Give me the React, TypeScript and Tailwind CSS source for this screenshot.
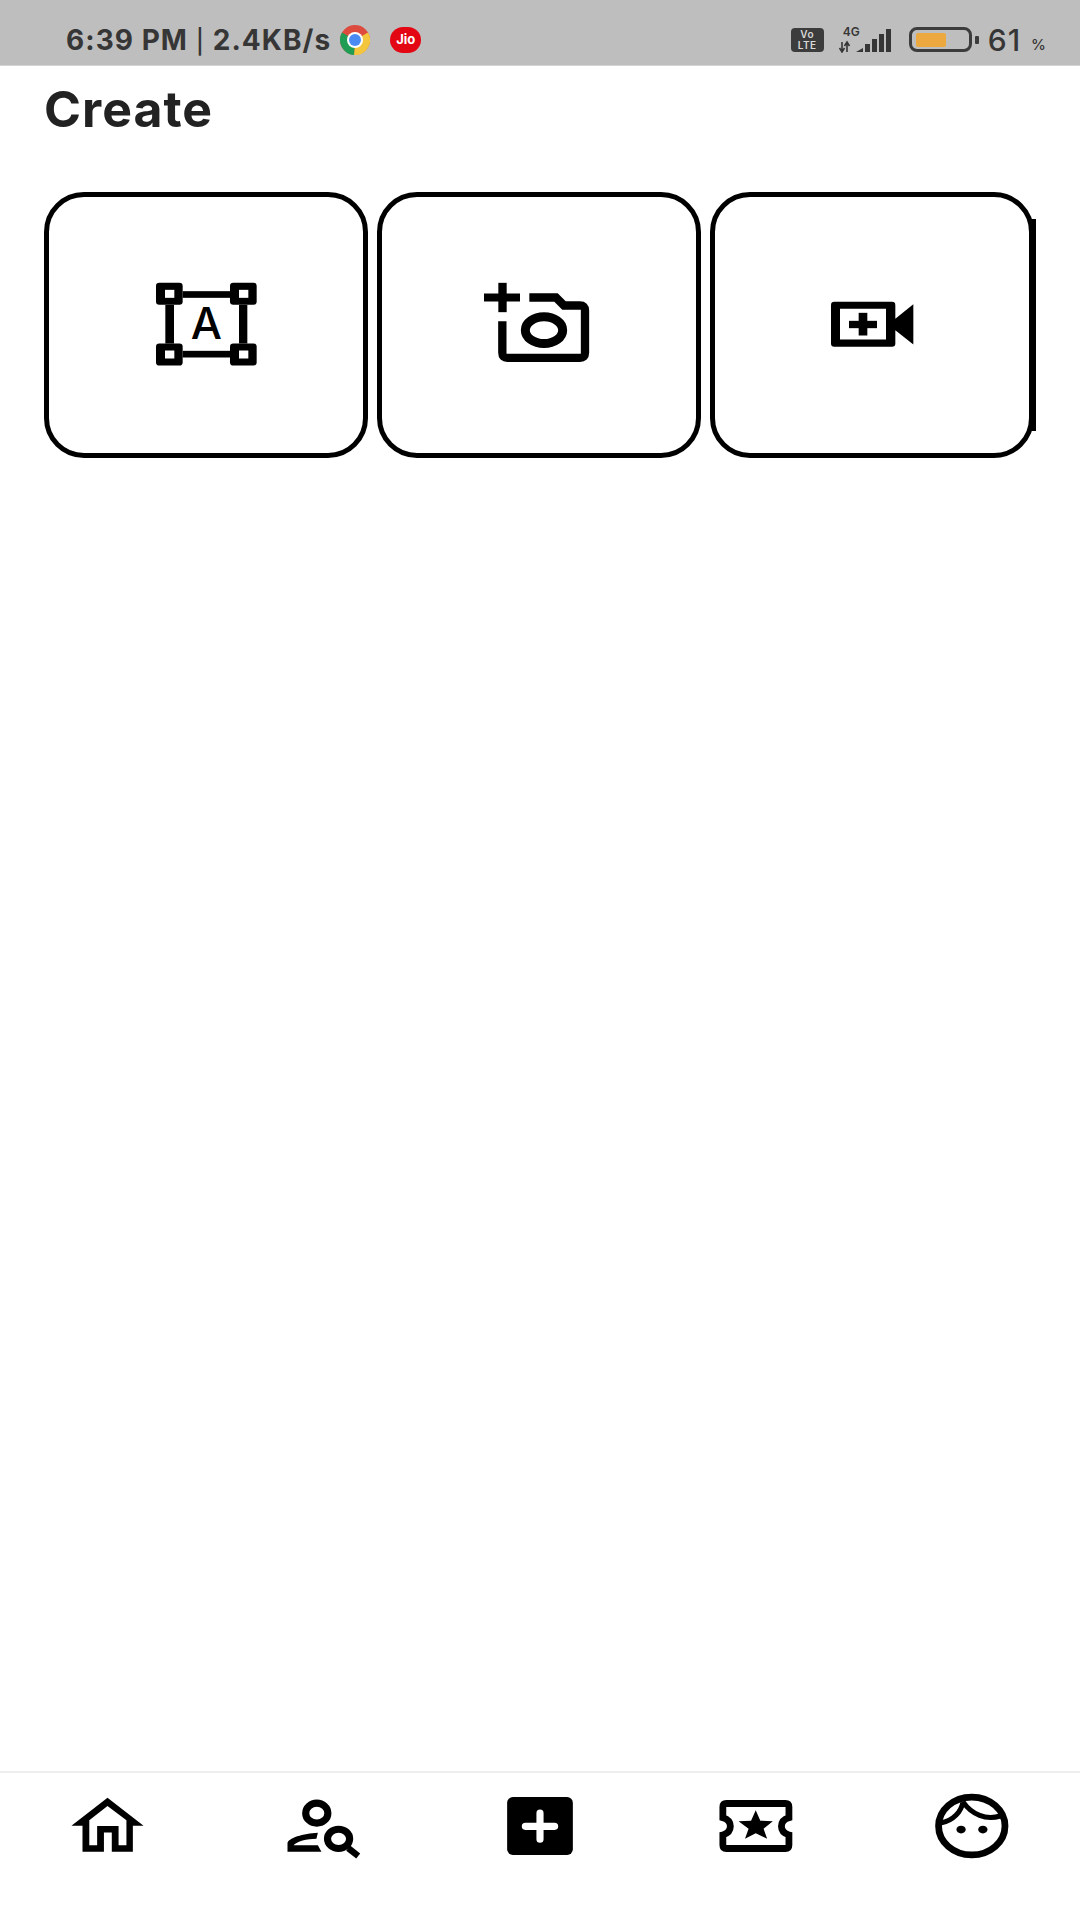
const font = { fontFamily: "Inter, 'Liberation Sans', sans-serif" };

function Card({ viewBox, children }: { viewBox: string; children: React.ReactNode }) {
  return (
    <div className="w-[324px] h-[266px] shrink-0 rounded-[40px] border-[5px] border-black bg-white flex items-center justify-center">
      <svg width="120" height="100" viewBox={viewBox}>{children}</svg>
    </div>
  );
}

function NavItem({ viewBox, children }: { viewBox: string; children: React.ReactNode }) {
  return (
    <div className="flex-1 flex justify-center pt-[13px]">
      <svg width="120" height="80" viewBox={viewBox}>{children}</svg>
    </div>
  );
}

function Chrome() {
  return (
    <svg width="30" height="30" viewBox="-15 -15 30 30" className="ml-[9px]">
      <circle r="15" fill="#dd4b3e" />
      <path d="M0 0 L13 -7.5 A15 15 0 0 1 -1 15 Z" fill="#f4c63d" />
      <path d="M0 0 L-1 15 A15 15 0 0 1 -13 -7.5 Z" fill="#1f9d55" />
      <circle r="8" fill="#fff" />
      <circle r="6" fill="#4a8af4" />
    </svg>
  );
}

export default function App() {
  return (
    <div className="w-[1080px] h-[1920px] flex flex-col bg-white overflow-hidden" style={font}>
      <div className="h-[66px] shrink-0 bg-[#bebebe] border-b border-[#d4d4d4] flex items-center pl-[66px] pr-[34px] pt-[14px] text-[#363636]">
        <span className="text-[28px] font-bold leading-none tracking-[1.05px] whitespace-nowrap">
          6:39 PM <span className="text-[24px] font-medium">|</span> 2.4KB/s
        </span>
        <Chrome />
        <div className="ml-[20px] w-[31px] h-[26px] rounded-full bg-[#e30613] text-white text-[13px] font-bold flex items-center justify-center">Jio</div>
        <div className="flex-1" />
        <div className="w-[33px] h-[24px] rounded-[4px] bg-[#3c3c3c] text-[#d8d8d8] text-[10px] leading-[11px] font-semibold flex flex-col items-center justify-center tracking-[0.5px]">
          <span>Vo</span>
          <span>LTE</span>
        </div>
        <div className="ml-[15px] relative w-[58px] h-[26px]">
          <span className="absolute left-[4px] -top-[1px] text-[12px] leading-[12px] font-semibold">4G</span>
          <svg className="absolute left-0 top-0" width="58" height="26" viewBox="0 0 58 26">
            <path d="M3 15v10M0.5 21l2.5 4 2.5-4M8 25V15M5.5 19L8 15l2.5 4" stroke="#363636" strokeWidth="1.6" fill="none" />
            <path d="M17 25l7-4v4z" fill="#363636" />
            <rect x="26" y="17" width="5" height="8" fill="#363636" />
            <rect x="33" y="12" width="5" height="13" fill="#363636" />
            <rect x="40" y="7" width="5" height="18" fill="#363636" />
            <rect x="47" y="2" width="5" height="23" fill="#363636" />
          </svg>
        </div>
        <div className="ml-[12px] w-[63px] h-[25px] rounded-[8px] border-[3px] border-[#3c3c3c] flex items-center pl-[4px]">
          <div className="w-[30px] h-[14px] rounded-[2px] bg-[#eba93f]" />
        </div>
        <div className="ml-[3px] w-[4px] h-[8px] rounded-[1px] bg-[#3c3c3c]" />
        <span className="ml-[9px] text-[30px] leading-none font-medium tracking-[1px]">61</span>
        <span className="ml-[10px] mt-[9px] text-[15px] leading-none font-medium">%</span>
      </div>

      <div className="flex-1 min-h-0 pl-[44px]">
        <h1 className="text-[50px] leading-[56px] mt-[15px] font-bold tracking-[1px] text-[#222222]">Create</h1>
        <div className="mt-[55px] w-[992px] flex gap-[9px] overflow-hidden">
          <Card viewBox="348 286.5 360 300">
            <g fill="#000">
              <rect x="458" y="335" width="142" height="20" />
              <rect x="458" y="514" width="142" height="20" />
              <rect x="406" y="376" width="26" height="116" />
              <rect x="627" y="376" width="25" height="116" />
            </g>
            {[[378, 310], [600, 310], [378, 492], [600, 492]].map(([x, y]) => (
              <g key={`${x}-${y}`}>
                <rect x={x} y={y} width="80" height="66" rx="10" fill="#000" />
                <rect x={x + 27} y={y + 21} width="28" height="24" fill="#fff" />
              </g>
            ))}
            <text x="529" y="478" textAnchor="middle" fontSize="132" fontWeight="500" fontFamily="Inter, sans-serif" fill="#000">A</text>
          </Card>
          <Card viewBox="27 16.5 360 300">
            <rect x="42" y="72" width="108" height="24" fill="#000" />
            <rect x="85" y="40" width="25" height="88" fill="#000" />
            <path d="M97 155 V250 Q97 265 112 265 H330 Q345 265 345 250 V123 Q345 108 330 108 H282 L258 84 H178" fill="none" stroke="#000" strokeWidth="25" />
            <ellipse cx="222" cy="182" rx="56" ry="40" fill="none" stroke="#000" strokeWidth="27" />
          </Card>
          <div className="relative flex">
            <Card viewBox="456 286.5 360 300">
              <path fillRule="evenodd" d="M523 367 H696 Q706 367 706 377 V418 L760 374 V495 L706 452 V492 Q706 502 696 502 H523 Q513 502 513 492 V377 Q513 367 523 367 Z M540 388 V480 H678 V388 Z" fill="#000" />
              <rect x="567" y="424" width="84" height="22" fill="#000" />
              <rect x="596" y="400" width="26" height="68" fill="#000" />
            </Card>
            <div className="w-[5px] -ml-[3px] my-[27px] bg-black" />
          </div>
        </div>
      </div>

      <div className="h-[149px] shrink-0 border-t-[2px] border-[#eeeeee] bg-white flex">
        <NavItem viewBox="134.4 84 336 224">
          <path fillRule="evenodd" fill="#000" d="M200 195 L301 117 L402 195 H372 V268 H313 V214 H291 V268 H231 V195 Z M301 140 L250 180 V250 H272 V196 H332 V250 H354 V180 Z" />
        </NavItem>
        <NavItem viewBox="739.2 84 336 224">
          <ellipse cx="887" cy="160" rx="31" ry="28" fill="none" stroke="#000" strokeWidth="20" />
          <path d="M805 268 V245 C805 230 850 217 890 215 L886 232 C860 232 830 240 822 250 H890 L900 268 Z" fill="#000" />
          <ellipse cx="948" cy="232" rx="31" ry="27" fill="none" stroke="#000" strokeWidth="20" />
          <path d="M975 258 L1003 280" stroke="#000" strokeWidth="18" />
        </NavItem>
        <NavItem viewBox="-112 84 336 224">
          <rect x="-36" y="115" width="184" height="162" rx="16" fill="#000" />
          <path d="M15 197 H97 M56 160 V233" stroke="#fff" strokeWidth="20" strokeLinecap="round" />
        </NavItem>
        <NavItem viewBox="492.8 84 336 224">
          <path d="M568 143 Q568 133 578 133 H743 Q753 133 753 143 V173 C735 178 732 188 732 197 C732 206 735 216 753 221 V249 Q753 259 743 259 H578 Q568 259 568 249 V221 C586 216 589 206 589 197 C589 188 586 178 568 173 Z" fill="none" stroke="#000" strokeWidth="19" />
          <path d="M660 152 L673 181 L708 183 L682 204 L692 232 L660 216 L630 232 L640 204 L612 183 L647 181 Z" fill="#000" />
        </NavItem>
        <NavItem viewBox="1097.6 84 336 224">
          <ellipse cx="1265" cy="196" rx="93" ry="81" fill="none" stroke="#000" strokeWidth="19" />
          <path d="M1180 187 C1215 180 1235 155 1240 130 M1240 128 C1265 165 1305 180 1345 168" fill="none" stroke="#000" strokeWidth="14" />
          <ellipse cx="1235" cy="206" rx="13" ry="11" fill="#000" />
          <ellipse cx="1296" cy="206" rx="13" ry="11" fill="#000" />
        </NavItem>
      </div>
    </div>
  );
}
